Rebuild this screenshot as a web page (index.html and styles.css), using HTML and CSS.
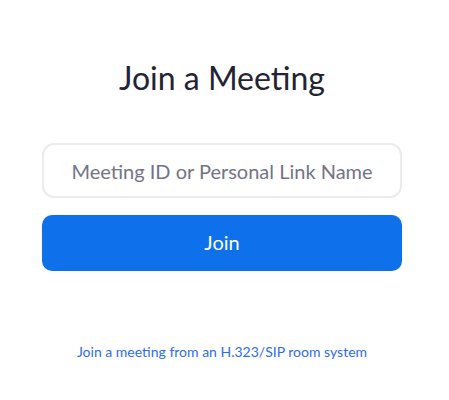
FILE: index.html
```html
<!DOCTYPE html>
<html lang="en">
<head>
    <meta charset="UTF-8">
    <title>Join a Meeting</title>
    <link rel="stylesheet" href="styles.css">
</head>
<body>
    <div class="join-page">
        <h1 class="title">Join a Meeting</h1>
        <form class="join-form">
            <input class="meeting-input" type="text" placeholder="Meeting ID or Personal Link Name">
            <button class="join-btn" type="button">Join</button>
        </form>
        <a class="sip-link" href="#">Join a meeting from an H.323/SIP room system</a>
    </div>
</body>
</html>
```

FILE: styles.css
```css
/* page */
body, html {
    margin: 0;
    padding: 0;
    background: #fff;
    font-family: Lato, "Open Sans", sans-serif;
}
.join-page {
    width: 360px;
    margin-left: 42px;
    padding-top: 58px;
    display: flex;
    flex-direction: column;
    align-items: center;
}
/* title */
.title {
    margin: 0;
    font-size: 32px;
    font-weight: 400;
    line-height: 40px;
    color: #232333;
}
/* form */
.join-form {
    width: 100%;
    margin-top: 45px;
    display: flex;
    flex-direction: column;
    gap: 17px;
}
.meeting-input {
    box-sizing: border-box;
    width: 100%;
    height: 55px;
    border: 2px solid #ececec;
    border-radius: 12px;
    padding: 0 12px;
    font-family: Lato, sans-serif;
    font-size: 20px;
    text-align: center;
    color: #232333;
    outline: none;
}
.meeting-input::placeholder {
    color: #747487;
}
.join-btn {
    height: 56px;
    border: none;
    border-radius: 10px;
    background-color: #0e71eb;
    color: #fff;
    font-family: Lato, sans-serif;
    font-size: 20px;
    padding: 0 0 2px;
    cursor: pointer;
}
/* link */
.sip-link {
    margin-top: 72px;
    font-size: 14px;
    color: #2d6cf0;
    text-decoration: none;
}
```
